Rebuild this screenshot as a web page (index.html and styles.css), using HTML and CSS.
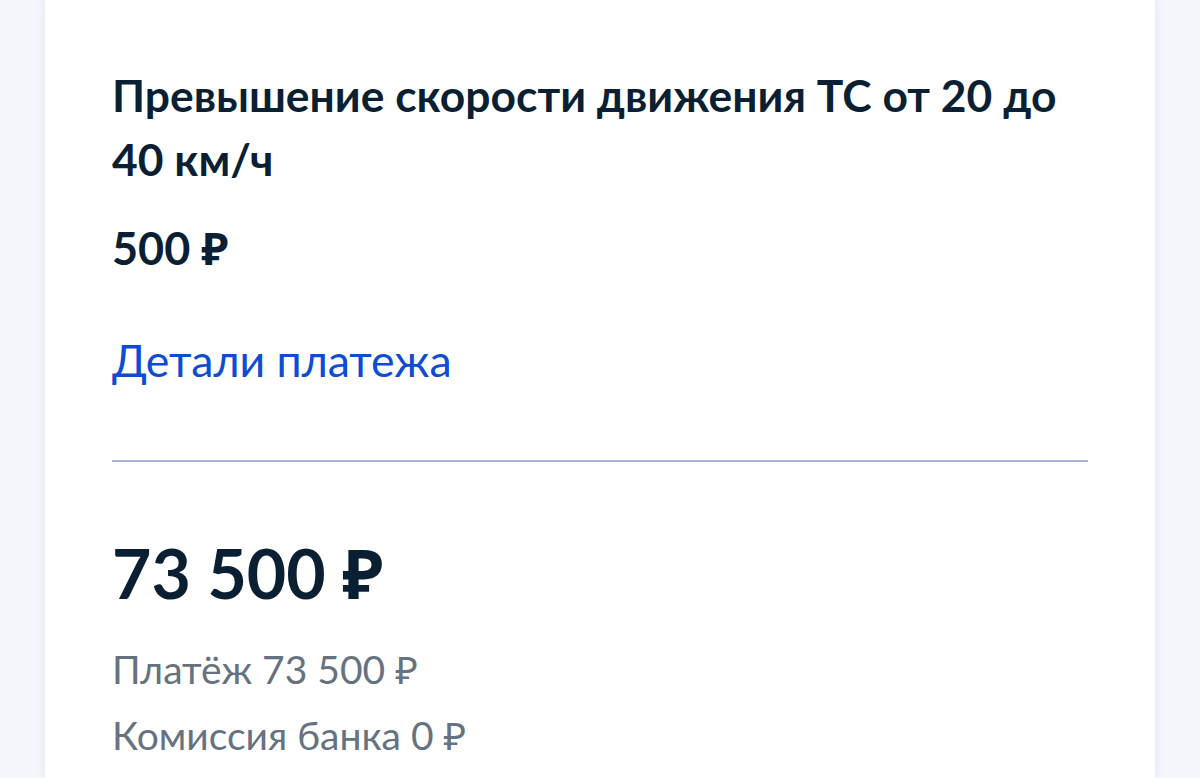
FILE: index.html
```html
<!DOCTYPE html>
<html lang="ru">
<head>
<meta charset="utf-8">
<title>Платёж</title>
<link rel="stylesheet" href="styles.css">
</head>
<body>
<div class="page">
  <div class="card">
    <h1 class="title">Превышение скорости движения ТС от 20 до 40 км/ч</h1>
    <div class="amount">500 ₽</div>
    <a class="details" href="#">Детали платежа</a>
    <hr class="divider">
    <div class="total">73 500 ₽</div>
    <div class="meta">Платёж 73 500 ₽</div>
    <div class="meta meta-second">Комиссия банка 0 ₽</div>
  </div>
</div>
</body>
</html>
```

FILE: styles.css
```css
html, body {
  margin: 0;
  padding: 0;
  height: 100%;
}
body {
  background: #f6f7fc;
  font-family: Lato, "Open Sans", "Noto Sans", sans-serif;
  color: #0b1f33;
  overflow: hidden;
}
.page {
  display: flex;
  justify-content: center;
  height: 100%;
}
.card {
  width: 1110px;
  box-sizing: border-box;
  background: #ffffff;
  box-shadow: 0 0 10px rgba(150, 165, 220, 0.25);
  padding: 63px 67px 0 67px;
  display: flex;
  flex-direction: column;
  align-items: flex-start;
}
.title {
  margin: 0;
  font-size: 44.4px;
  font-weight: 700;
  line-height: 64px;
}
.amount {
  margin-top: 30px;
  font-size: 45px;
  font-weight: 700;
  line-height: 1.2;
}
.details {
  margin-top: 58px;
  font-size: 44.6px;
  line-height: 1.2;
  color: #0d4cd3;
  text-decoration: none;
}
.divider {
  align-self: stretch;
  margin: 73px 0 0 0;
  border: 0;
  height: 2px;
  background: #a9b3db;
}
.total {
  margin-top: 70px;
  font-size: 68px;
  font-weight: 700;
  line-height: 1.2;
}
.meta {
  margin-top: 33px;
  font-size: 39px;
  line-height: 1.2;
  color: #66727f;
}
.meta-second {
  margin-top: 19px;
}
```
